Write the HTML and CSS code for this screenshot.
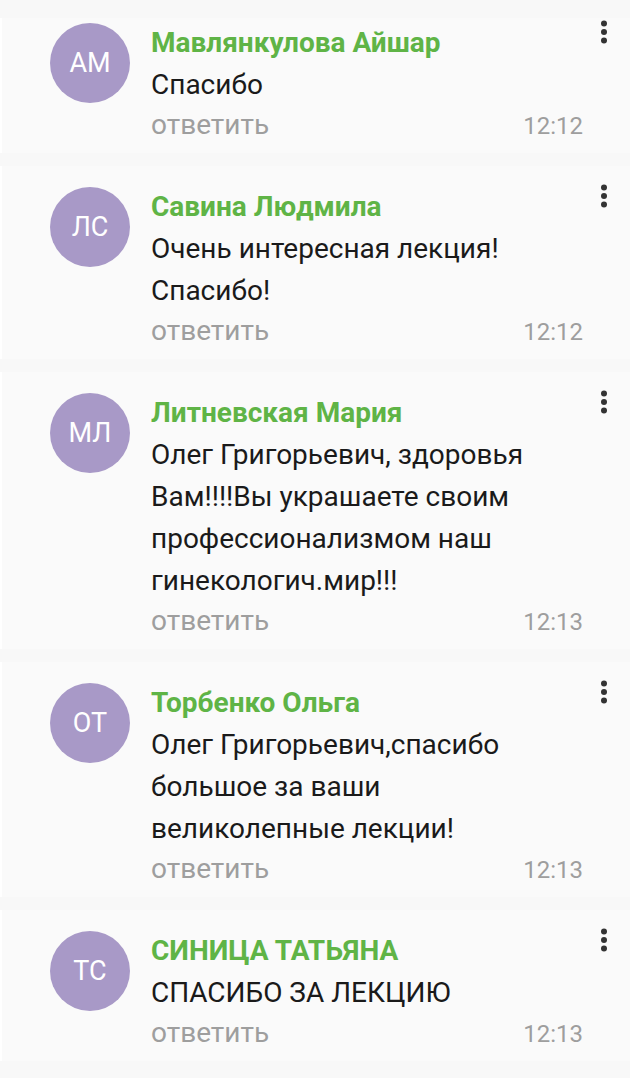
FILE: index.html
```html
<!DOCTYPE html>
<html lang="ru">
<head>
  <meta charset="UTF-8" />
  <meta name="viewport" content="width=device-width, initial-scale=1.0"/>
  <title>Комментарии</title>
  <link rel="stylesheet" href="styles.css">
</head>
<body>

  <div class="comments">

    <!-- комментарий 1 -->
    <div class="comment">
      <div class="avatar">АМ</div>
      <div class="comment-body">
        <div class="author">Мавлянкулова Айшар</div>
        <div class="message">Спасибо</div>
        <div class="comment-footer">
          <span class="reply">ответить</span>
          <span class="time">12:12</span>
        </div>
      </div>
      <div class="menu">
        <svg width="8" height="24" viewBox="0 0 8 24"><circle cx="4" cy="3.5" r="3"/><circle cx="4" cy="12" r="3"/><circle cx="4" cy="20.5" r="3"/></svg>
      </div>
    </div>

    <!-- комментарий 2 -->
    <div class="comment">
      <div class="avatar">ЛС</div>
      <div class="comment-body">
        <div class="author">Савина Людмила</div>
        <div class="message">Очень интересная лекция! Спасибо!</div>
        <div class="comment-footer">
          <span class="reply">ответить</span>
          <span class="time">12:12</span>
        </div>
      </div>
      <div class="menu">
        <svg width="8" height="24" viewBox="0 0 8 24"><circle cx="4" cy="3.5" r="3"/><circle cx="4" cy="12" r="3"/><circle cx="4" cy="20.5" r="3"/></svg>
      </div>
    </div>

    <!-- комментарий 3 -->
    <div class="comment">
      <div class="avatar">МЛ</div>
      <div class="comment-body">
        <div class="author">Литневская Мария</div>
        <div class="message">Олег Григорьевич, здоровья Вам!!!!Вы украшаете своим профессионализмом наш гинекологич.мир!!!</div>
        <div class="comment-footer">
          <span class="reply">ответить</span>
          <span class="time">12:13</span>
        </div>
      </div>
      <div class="menu">
        <svg width="8" height="24" viewBox="0 0 8 24"><circle cx="4" cy="3.5" r="3"/><circle cx="4" cy="12" r="3"/><circle cx="4" cy="20.5" r="3"/></svg>
      </div>
    </div>

    <!-- комментарий 4 -->
    <div class="comment">
      <div class="avatar">ОТ</div>
      <div class="comment-body">
        <div class="author">Торбенко Ольга</div>
        <div class="message">Олег Григорьевич,спасибо большое за ваши великолепные лекции!</div>
        <div class="comment-footer">
          <span class="reply">ответить</span>
          <span class="time">12:13</span>
        </div>
      </div>
      <div class="menu">
        <svg width="8" height="24" viewBox="0 0 8 24"><circle cx="4" cy="3.5" r="3"/><circle cx="4" cy="12" r="3"/><circle cx="4" cy="20.5" r="3"/></svg>
      </div>
    </div>

    <!-- комментарий 5 -->
    <div class="comment">
      <div class="avatar">ТС</div>
      <div class="comment-body">
        <div class="author">СИНИЦА ТАТЬЯНА</div>
        <div class="message">СПАСИБО ЗА ЛЕКЦИЮ</div>
        <div class="comment-footer">
          <span class="reply">ответить</span>
          <span class="time">12:13</span>
        </div>
      </div>
      <div class="menu">
        <svg width="8" height="24" viewBox="0 0 8 24"><circle cx="4" cy="3.5" r="3"/><circle cx="4" cy="12" r="3"/><circle cx="4" cy="20.5" r="3"/></svg>
      </div>
    </div>

  </div>

</body>
</html>
```

FILE: styles.css
```css
* {
  margin: 0;
  padding: 0;
  box-sizing: border-box;
  font-family: 'Roboto', 'Noto Sans', sans-serif;
}

body {
  background: #f8f8f8;
  min-height: 100vh;
}

.comments {
  display: flex;
  flex-direction: column;
  gap: 13px;
  padding-top: 18px;
}

.comment {
  display: flex;
  align-items: flex-start;
  background: #fafafa;
  border-left: 2px solid #ffffff;
  padding: 20px 5px 8px 48px;
}

.comment:first-child {
  padding-top: 4px;
}

.avatar {
  width: 80px;
  height: 80px;
  border-radius: 50%;
  background: #a899c7;
  color: #ffffff;
  font-size: 27px;
  display: flex;
  align-items: center;
  justify-content: center;
  flex-shrink: 0;
  margin-top: 1px;
  margin-right: 21px;
}

.comment-body {
  flex: 1;
}

.author {
  color: #5fb446;
  font-weight: bold;
  font-size: 28px;
  line-height: 42px;
}

.message {
  color: #1a1a1a;
  font-size: 28px;
  line-height: 42px;
  max-width: 400px;
}

.comment-footer {
  display: flex;
  justify-content: space-between;
  align-items: baseline;
  color: #9e9e9e;
  font-size: 28px;
  line-height: 38px;
}

.time {
  font-size: 24px;
}

.menu {
  width: 42px;
  display: flex;
  justify-content: center;
  margin-top: -2px;
}

.menu svg {
  fill: #333333;
}
```
